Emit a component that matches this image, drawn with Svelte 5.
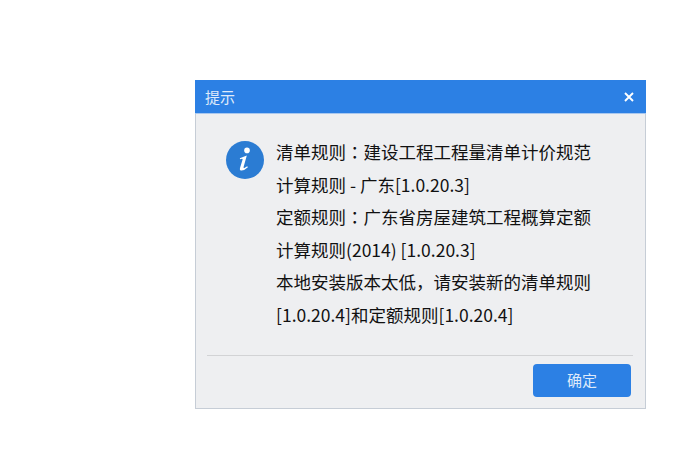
<script>
  const lines = [
    ['清单规则', '：', '建设工程工程量清单计价规范'],
    ['计算规则 - 广东[1.0.20.3]'],
    ['定额规则', '：', '广东省房屋建筑工程概算定额'],
    ['计算规则(2014) [1.0.20.3]'],
    ['本地安装版本太低，请安装新的清单规则'],
    ['[1.0.20.4]和定额规则[1.0.20.4]']
  ];
</script>

<div class="page">
  <div class="dialog">
    <header class="title">
      <span class="title-text">提示</span>
      <svg class="close" viewBox="0 0 10 10" width="10" height="10" aria-label="关闭">
        <path d="M1 1L9 9M9 1L1 9" stroke="#fff" stroke-width="1.9" fill="none" />
      </svg>
    </header>
    <div class="body">
      <svg class="info" viewBox="0 0 38 38" width="38" height="38">
        <circle cx="19" cy="19" r="19" fill="#2b7cd3" />
        <circle cx="21" cy="9.4" r="2.8" fill="#fff" />
        <path d="M13.8 17.2 L20.8 14.6 L17.6 26 Q17.2 27.6 18.8 26.8 L21.2 25.2 L21.9 26.2 Q18.4 29.4 15.6 29.6 Q13.4 29.6 14 27 L16.6 18.4 Q16.8 17.2 14.2 18.2 Z" fill="#fff" />
      </svg>
      <div class="message">
        {#each lines as line}
          <div class="line">{line[0]}{#if line.length > 1}<span class="colon">{line[1]}</span>{line[2]}{/if}</div>
        {/each}
      </div>
    </div>
    <footer class="footer">
      <button class="ok">确定</button>
    </footer>
  </div>
</div>

<style>
  :global(body) {
    margin: 0;
    background: #fff;
  }
  .page {
    width: 692px;
    height: 474px;
    box-sizing: border-box;
    padding: 80px 46px 0 195px;
    font-family: "Noto Sans CJK SC", "Liberation Sans", sans-serif;
  }
  .dialog {
    width: 451px;
    height: 329px;
    box-sizing: border-box;
    background: #eeeff1;
    border: 1px solid #c6cdd6;
    border-top: 0;
    display: flex;
    flex-direction: column;
  }
  .title {
    height: 34px;
    margin: 0 -1px;
    flex: none;
    background: #2c80e4;
    color: #fff;
    display: flex;
    align-items: center;
    justify-content: space-between;
    padding: 0 12px 0 10px;
    font-size: 15px;
    border-bottom: 1px solid #a9c8ef;
    box-sizing: border-box;
  }
  .title-text {
    color: #dfeafa;
  }
  .body {
    flex: 1;
    display: flex;
    padding: 22px 0 0 30px;
    gap: 12px;
    align-items: flex-start;
    min-height: 0;
  }
  .info {
    flex: none;
    margin-top: 5px;
  }
  .message {
    font-size: 17.5px;
    line-height: 32.5px;
    color: #111;
    white-space: nowrap;
  }
  .colon {
    font-family: "Noto Sans CJK TC", sans-serif;
  }
  .footer {
    flex: none;
    height: 53px;
    box-sizing: border-box;
    margin: 0 12px 0 11px;
    border-top: 1px solid #d2d3d5;
    display: flex;
    justify-content: flex-end;
    align-items: flex-start;
    padding: 8px 2px 0 0;
  }
  .ok {
    width: 98px;
    height: 33px;
    border: 0;
    border-radius: 4px;
    background: #2c80e4;
    color: #dfeafa;
    font: inherit;
    font-size: 15px;
    padding: 0 0 2px;
  }
</style>
